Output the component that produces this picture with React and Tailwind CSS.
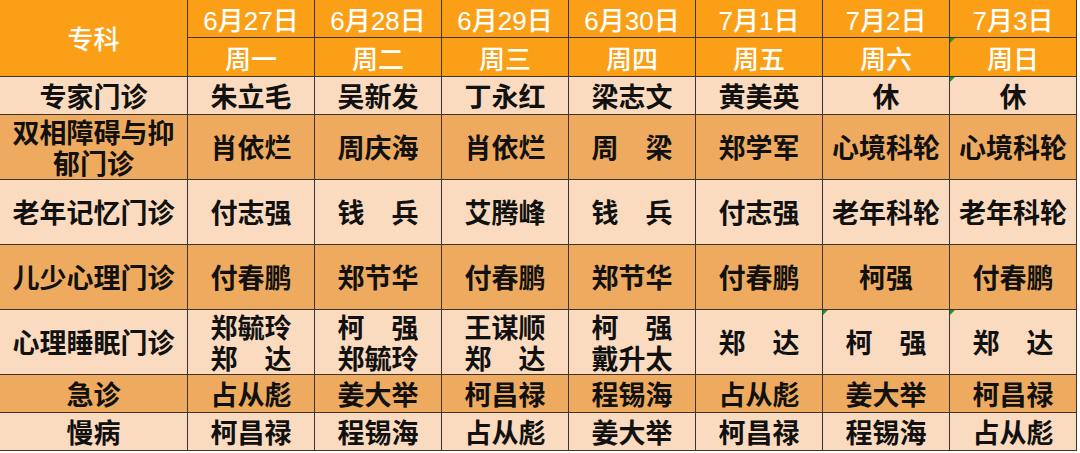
import React from "react";

const dates = ["6月27日", "6月28日", "6月29日", "6月30日", "7月1日", "7月2日", "7月3日"];
const days = ["周一", "周二", "周三", "周四", "周五", "周六", "周日"];

// each row: [name, tone, cells]
const rows = [
  ["专家门诊", "light", ["朱立毛", "吴新发", "丁永红", "梁志文", "黄美英", "休", "休"]],
  ["双相障碍与抑郁门诊", "dark", ["肖依烂", "周庆海", "肖依烂", "周　梁", "郑学军", "心境科轮", "心境科轮"]],
  ["老年记忆门诊", "light", ["付志强", "钱　兵", "艾腾峰", "钱　兵", "付志强", "老年科轮", "老年科轮"]],
  ["儿少心理门诊", "dark", ["付春鹏", "郑节华", "付春鹏", "郑节华", "付春鹏", "柯强", "付春鹏"]],
  [
    "心理睡眠门诊",
    "light",
    [
      ["郑毓玲", "郑　达"],
      ["柯　强", "郑毓玲"],
      ["王谋顺", "郑　达"],
      ["柯　强", "戴升太"],
      "郑　达",
      "柯　强",
      "郑　达",
    ],
  ],
  ["急诊", "dark", ["占从彪", "姜大举", "柯昌禄", "程锡海", "占从彪", "姜大举", "柯昌禄"]],
  ["慢病", "light", ["柯昌禄", "程锡海", "占从彪", "姜大举", "柯昌禄", "程锡海", "占从彪"]],
];

const tone = {
  light: "bg-[#fadbbf]",
  dark: "bg-[#eeaa5e]",
};

// green comment markers, keyed "row-col" (row 0/1 = header rows)
const marks = new Set(["1-6", "2-6", "6-5", "6-6"]);

function Mark() {
  return (
    <span className="absolute left-0 top-0 w-0 h-0 border-t-[5px] border-r-[5px] border-t-[#1f9a2a] border-r-transparent" />
  );
}

function Cell({ children, className = "", mark }) {
  return (
    <div
      className={`relative flex items-center justify-center text-center pt-[5px] border-r border-b border-[#3e342b] ${className}`}
    >
      {mark && <Mark />}
      {children}
    </div>
  );
}

export default function App() {
  return (
    <div
      className="bg-white w-[1080px] h-[453px] overflow-hidden"
      style={{ fontFamily: '"Liberation Sans", "Noto Sans CJK SC", sans-serif' }}
    >
      <div className="grid grid-cols-[188px_repeat(7,127px)] grid-rows-[38px_39px_38px_65px_65px_65px_65px_38px_38px] w-[1077px]">
        <Cell className="row-span-2 bg-[#fb9f17] text-white text-[26px] font-medium">专科</Cell>
        {dates.map((d, i) => (
          <Cell key={d} className="bg-[#fb9f17] text-white text-[26px] font-medium leading-none" mark={marks.has(`0-${i}`)}>
            {d}
          </Cell>
        ))}
        {days.map((d, i) => (
          <Cell key={d} className="bg-[#fb9f17] text-white text-[26px] font-medium leading-none" mark={marks.has(`1-${i}`)}>
            {d}
          </Cell>
        ))}
        {rows.map(([name, t, cells], r) => (
          <React.Fragment key={name}>
            <Cell className={`${tone[t]} text-[#111] text-[27px] font-bold leading-[31px] px-2`}>{name}</Cell>
            {cells.map((c, i) => (
              <Cell
                key={i}
                className={`${tone[t]} text-[#111] text-[27px] font-bold leading-[31px]`}
                mark={marks.has(`${r + 2}-${i}`)}
              >
                {Array.isArray(c) ? (
                  <div className="flex flex-col">
                    {c.map((line) => (
                      <span key={line}>{line}</span>
                    ))}
                  </div>
                ) : (
                  c
                )}
              </Cell>
            ))}
          </React.Fragment>
        ))}
      </div>
    </div>
  );
}
